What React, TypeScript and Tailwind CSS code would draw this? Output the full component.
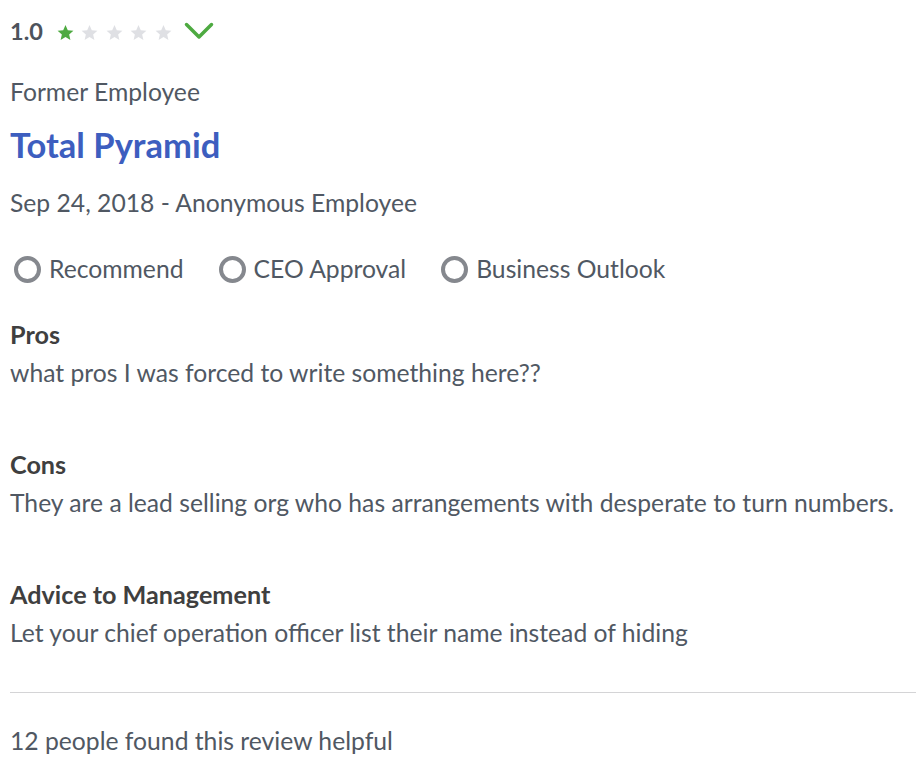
import React from 'react';

const Star = ({ filled }: { filled: boolean }) => (
    <svg viewBox="0 0 24 24" className={`w-[19px] h-[19px] ${filled ? 'text-[#4eaa41]' : 'text-[#dfe0e4]'}`} fill="currentColor">
        <path d="M12 2.5l2.9 6.6 7.1.6-5.4 4.7 1.6 7-6.2-3.8-6.2 3.8 1.6-7L2 9.7l7.1-.6z" />
    </svg>
);

const Radio = ({ label }: { label: string }) => (
    <div className="flex items-center">
        <span className="w-[27px] h-[27px] rounded-full border-[4px] border-[#85888e] ml-[4px] mr-[8px]" />
        <span>{label}</span>
    </div>
);

const Section = ({ title, text, first }: { title: string; text: string; first?: boolean }) => (
    <div className={first ? 'mt-[35px]' : 'mt-[61px]'}>
        <div className="font-bold text-[25.2px] text-[#3f3f40] leading-[30px]">{title}</div>
        <div className="mt-[9px] leading-[30px]">{text}</div>
    </div>
);

export default function App() {
    return (
        <div className="min-h-screen bg-white pl-[10px] pt-[17px] text-[24.7px] text-[#505863]" style={{ fontFamily: 'Lato, "Liberation Sans", sans-serif' }}>
            <div className="flex items-center h-[30px]">
                <span className="text-[23.5px] font-bold text-[#4d535c] mr-[13px]">1.0</span>
                <div className="flex items-center gap-[5.5px]">
                    <Star filled />
                    <Star filled={false} />
                    <Star filled={false} />
                    <Star filled={false} />
                    <Star filled={false} />
                </div>
                <svg viewBox="0 0 30 18" className="w-[30px] h-[18px] ml-[11px] -mt-[2px]" fill="none" stroke="#4eaa41" strokeWidth={3.5} strokeLinecap="round" strokeLinejoin="round">
                    <path d="M2.5 2.5L15 15 27.5 2.5" />
                </svg>
            </div>

            <div className="mt-[30px] leading-[30px]">Former Employee</div>
            <h1 className="mt-[18px] text-[34.5px] leading-[40px] font-bold text-[#3d5ebf]">Total Pyramid</h1>
            <div className="mt-[23px] leading-[30px]">Sep 24, 2018 - Anonymous Employee</div>

            <div className="mt-[36px] h-[30px] flex items-center gap-[31px]">
                <Radio label="Recommend" />
                <Radio label="CEO Approval" />
                <Radio label="Business Outlook" />
            </div>

            <Section first title="Pros" text="what pros I was forced to write something here??" />
            <Section title="Cons" text="They are a lead selling org who has arrangements with desperate to turn numbers." />
            <Section title="Advice to Management" text="Let your chief operation officer list their name instead of hiding" />

            <div className="mt-[44px] h-px bg-[#d4d4d6]" />
            <div className="mt-[33px] leading-[30px]">12 people found this review helpful</div>
        </div>
    );
}
